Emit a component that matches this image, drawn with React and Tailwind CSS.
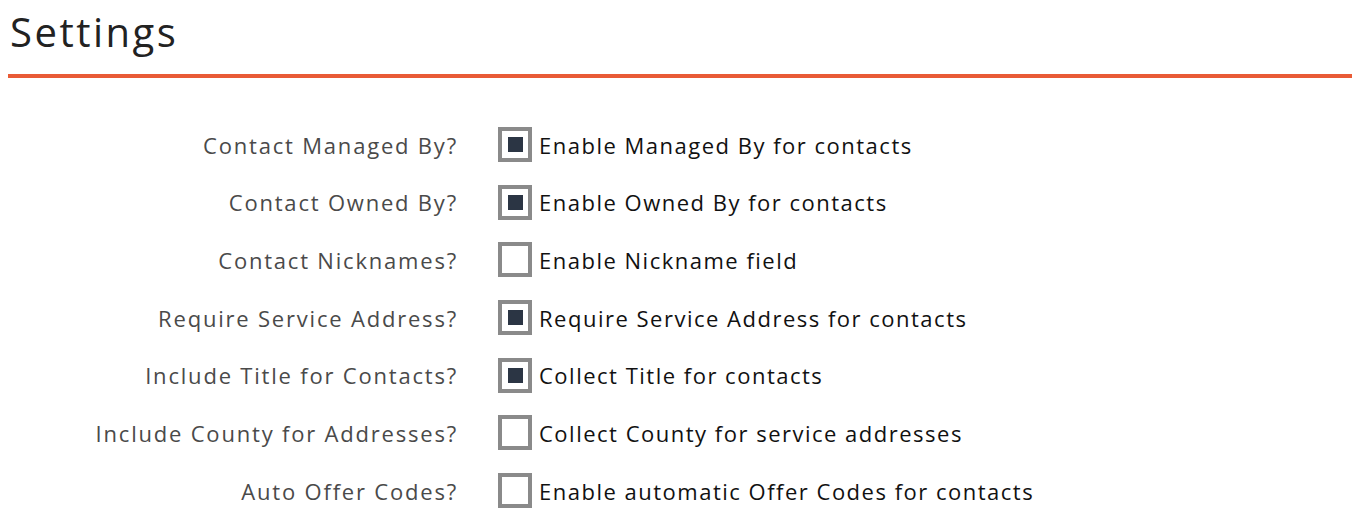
import React from 'react';

const rows = [
  { label: 'Contact Managed By?', text: 'Enable Managed By for contacts', checked: true },
  { label: 'Contact Owned By?', text: 'Enable Owned By for contacts', checked: true },
  { label: 'Contact Nicknames?', text: 'Enable Nickname field', checked: false },
  { label: 'Require Service Address?', text: 'Require Service Address for contacts', checked: true },
  { label: 'Include Title for Contacts?', text: 'Collect Title for contacts', checked: true },
  { label: 'Include County for Addresses?', text: 'Collect County for service addresses', checked: false },
  { label: 'Auto Offer Codes?', text: 'Enable automatic Offer Codes for contacts', checked: false },
];

function Box({ checked }) {
  return (
    <div className="w-[34px] h-[35px] border-[4px] border-[#8a8a8a] bg-white flex items-center justify-center shrink-0">
      {checked && <div className="w-[15px] h-[15px] bg-[#2b3544]" />}
    </div>
  );
}

export default function App() {
  return (
    <div className="bg-white min-h-screen font-['Open_Sans',sans-serif]">
      <div className="pl-[10px] pt-[4px]">
        <h1 className="text-[40px] leading-[56px] text-[#222] tracking-[2.5px]">Settings</h1>
      </div>
      <div className="ml-[8px] mt-[14px] h-[4px] bg-[#e95b36]" />
      <div className="pt-[49px] flex flex-col gap-[22.7px]">
        {rows.map((r, i) => (
          <div key={i} className="flex items-center h-[35px]">
            <div className="w-[458px] text-right text-[22px] leading-[30px] text-[#4a4a4a] tracking-[1.8px]">{r.label}</div>
            <div className="ml-[40px] flex items-center gap-[7px]">
              <Box checked={r.checked} />
              <span className="text-[22px] leading-[30px] text-[#111] tracking-[1.5px]">{r.text}</span>
            </div>
          </div>
        ))}
      </div>
    </div>
  );
}
